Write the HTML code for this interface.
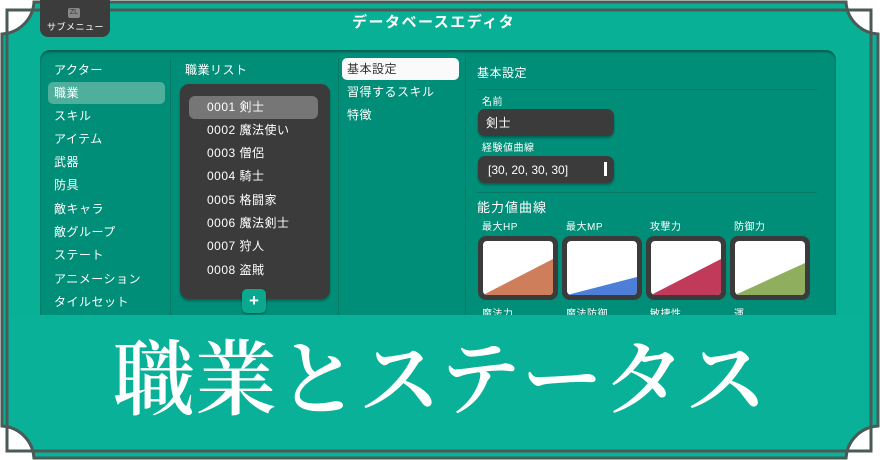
<!DOCTYPE html>
<html><head><meta charset="utf-8"><style>
*{margin:0;padding:0;box-sizing:border-box}
body{width:880px;height:460px;overflow:hidden;background:#fff;position:relative;font-family:"Liberation Sans","Noto Sans CJK JP",sans-serif;color:#fff}
.a{position:absolute}
.t{position:absolute;font-size:12px;line-height:14px;white-space:nowrap;letter-spacing:.5px}
.box{position:absolute;background:#3b3b3b;border-radius:7px;box-shadow:0 2px 2px rgba(0,0,0,.3)}
.g{position:absolute;width:80px;height:64px;background:#3b3b3b;border-radius:8px;padding:5px}
.g svg{display:block;border-radius:4px}
</style></head><body>
<svg class="a" style="left:0;top:0" width="880" height="460">
<path d="M34 2 H846 A34 34 0 0 0 878 34 V426 A34 34 0 0 0 846 458 H34 A34 34 0 0 0 2 426 V34 A34 34 0 0 0 34 2 Z" fill="#08b096" stroke="#4a5a56" stroke-width="3"/>
<rect x="7" y="10" width="864" height="441" fill="none" stroke="#4a5a56" stroke-width="3"/>
</svg>
<div class="a" style="left:40px;top:0;width:70px;height:37px;background:#3c3c3c;border-radius:0 0 8px 8px"></div>
<div class="a" style="left:68px;top:8px;width:12px;height:10px;background:#888;border-radius:2px;font-size:7px;color:#333;text-align:center;line-height:10px">ZL</div>
<div class="t" style="left:47px;top:22px;font-size:9px;line-height:10px">サブメニュー</div>
<div class="t" style="left:352px;top:14px;font-size:15px;line-height:18px;font-weight:bold;letter-spacing:1.5px">データベースエディタ</div>

<div class="a" style="left:40px;top:50px;width:796px;height:280px;background:#008e78;border-radius:10px;box-shadow:inset 0 2px 2px rgba(0,0,0,.35)"></div>
<div class="a" style="left:170px;top:58px;width:1px;height:260px;background:#077a66"></div>
<div class="a" style="left:338px;top:58px;width:1px;height:260px;background:#077a66"></div>
<div class="a" style="left:465px;top:58px;width:1px;height:260px;background:#077a66"></div>

<div class="a" style="left:48px;top:82px;width:117px;height:22px;background:#4fae9c;border-radius:5px"></div>
<div class="t" style="left:54px;top:63px">アクター</div>
<div class="t" style="left:54px;top:86px">職業</div>
<div class="t" style="left:54px;top:109px">スキル</div>
<div class="t" style="left:54px;top:132px">アイテム</div>
<div class="t" style="left:54px;top:155px">武器</div>
<div class="t" style="left:54px;top:178px">防具</div>
<div class="t" style="left:54px;top:202px">敵キャラ</div>
<div class="t" style="left:54px;top:225px">敵グループ</div>
<div class="t" style="left:54px;top:248px">ステート</div>
<div class="t" style="left:54px;top:272px">アニメーション</div>
<div class="t" style="left:54px;top:295px">タイルセット</div>

<div class="t" style="left:185px;top:63px">職業リスト</div>
<div class="box" style="left:180px;top:84px;width:150px;height:215px;border-radius:9px"></div>
<div class="a" style="left:189px;top:96px;width:129px;height:23px;background:#767676;border-radius:6px"></div>
<div class="t" style="left:207px;top:100px">0001 剣士</div>
<div class="t" style="left:207px;top:123px">0002 魔法使い</div>
<div class="t" style="left:207px;top:146px">0003 僧侶</div>
<div class="t" style="left:207px;top:169px">0004 騎士</div>
<div class="t" style="left:207px;top:193px">0005 格闘家</div>
<div class="t" style="left:207px;top:216px">0006 魔法剣士</div>
<div class="t" style="left:207px;top:239px">0007 狩人</div>
<div class="t" style="left:207px;top:263px">0008 盗賊</div>
<div class="a" style="left:242px;top:289px;width:24px;height:24px;background:#0aa88f;border-radius:5px;box-shadow:0 1px 2px rgba(0,0,0,.4);text-align:center;font-size:17px;line-height:23px;font-weight:bold">+</div>

<div class="a" style="left:342px;top:58px;width:117px;height:22px;background:#fafafa;border-radius:5px"></div>
<div class="t" style="left:347px;top:62px;color:#333">基本設定</div>
<div class="t" style="left:347px;top:85px">習得するスキル</div>
<div class="t" style="left:347px;top:108px">特徴</div>

<div class="t" style="left:477px;top:66px">基本設定</div>
<div class="a" style="left:477px;top:89px;width:340px;height:1px;background:#077a66"></div>
<div class="t" style="left:482px;top:96px;font-size:10px">名前</div>
<div class="box" style="left:478px;top:109px;width:136px;height:27px"></div>
<div class="t" style="left:486px;top:116px">剣士</div>
<div class="t" style="left:482px;top:142px;font-size:10px">経験値曲線</div>
<div class="box" style="left:478px;top:156px;width:136px;height:27px"></div>
<div class="t" style="left:488px;top:163px;letter-spacing:0">[30, 20, 30, 30]</div>
<div class="a" style="left:604px;top:162px;width:3px;height:14px;background:#fff"></div>
<div class="a" style="left:477px;top:192px;width:340px;height:1px;background:#077a66"></div>
<div class="t" style="left:477px;top:201px;font-size:13px;letter-spacing:1px">能力値曲線</div>
<div class="t" style="left:482px;top:221px;font-size:10px">最大HP</div>
<div class="t" style="left:566px;top:221px;font-size:10px">最大MP</div>
<div class="t" style="left:650px;top:221px;font-size:10px">攻撃力</div>
<div class="t" style="left:734px;top:221px;font-size:10px">防御力</div>
<div class="g" style="left:478px;top:236px"><svg width="70" height="54"><rect width="70" height="54" fill="#fff"/><path d="M0 54 L70 18 V54Z" fill="#cf7e5c"/></svg></div>
<div class="g" style="left:562px;top:236px"><svg width="70" height="54"><rect width="70" height="54" fill="#fff"/><path d="M0 54 L70 36 V54Z" fill="#4d7fd8"/></svg></div>
<div class="g" style="left:646px;top:236px"><svg width="70" height="54"><rect width="70" height="54" fill="#fff"/><path d="M0 54 L70 18 V54Z" fill="#c13a5a"/></svg></div>
<div class="g" style="left:730px;top:236px"><svg width="70" height="54"><rect width="70" height="54" fill="#fff"/><path d="M0 54 L70 22 V54Z" fill="#8fae5e"/></svg></div>
<div class="t" style="left:482px;top:308px;font-size:10px">魔法力</div>
<div class="t" style="left:566px;top:308px;font-size:10px">魔法防御</div>
<div class="t" style="left:650px;top:308px;font-size:10px">敏捷性</div>
<div class="t" style="left:734px;top:308px;font-size:10px">運</div>

<svg class="a" style="left:0;top:315px" width="880" height="145">
<path d="M3 0 H877 V111 A34 34 0 0 0 846 143 H34 A34 34 0 0 0 3 111 Z" fill="#08b198"/>
<path d="M2 111 V0 M878 0 V111 M7 0 V136 H871 V0" fill="none" stroke="#4a5a56" stroke-width="3"/>
<path d="M2 111 A34 34 0 0 1 34 143 H846 A34 34 0 0 1 878 111" fill="none" stroke="#4a5a56" stroke-width="3"/>
</svg>
<div class="a" style="left:0;top:326px;width:880px;text-align:center;font-family:'Liberation Serif','Noto Serif CJK SC',serif;font-weight:600;font-size:82px;line-height:110px;letter-spacing:0">職業とステータス</div>
</body></html>
